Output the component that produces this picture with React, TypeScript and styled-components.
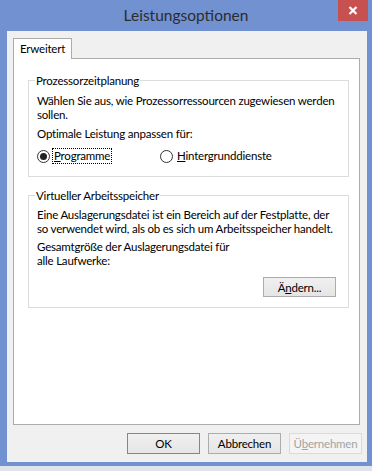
import React from "react";
import styled, { createGlobalStyle } from "styled-components";

const GlobalStyle = createGlobalStyle`
  html, body {
    margin: 0;
    padding: 0;
    background: #dfe4ea;
  }
  * {
    box-sizing: border-box;
  }
`;

const FONT = `Lato, "Liberation Sans", sans-serif`;

const Window = styled.div`
  width: 372px;
  height: 466px;
  background: #7191d1;
  display: flex;
  flex-direction: column;
  font-family: ${FONT};
  font-size: 11.5px;
  letter-spacing: -0.2px;
  color: #000;
`;

const TitleBar = styled.header`
  position: relative;
  height: 31px;
  flex: none;
  display: flex;
  align-items: center;
  justify-content: center;
  padding-bottom: 1px;
`;

const Title = styled.h1`
  margin: 0;
  font-family: ${FONT};
  font-weight: 400;
  font-size: 15.5px;
  letter-spacing: 0;
  color: #2c2c2c;
`;

const CloseButton = styled.button`
  position: absolute;
  top: 0;
  right: 4px;
  width: 30px;
  height: 21px;
  border: none;
  padding: 0;
  background: #c75050;
  display: grid;
  place-items: center;
`;

const Client = styled.div`
  flex: 1;
  margin: 0 5px 4px 7px;
  background: #f0f0f0;
  padding: 7px 6px 8px 6px;
  display: flex;
  flex-direction: column;
`;

const TabStrip = styled.div`
  height: 20px;
  display: flex;
  align-items: flex-start;
`;

const Tab = styled.div`
  position: relative;
  z-index: 1;
  width: 59px;
  height: 21px;
  background: #fff;
  border: 1px solid #acacac;
  border-bottom: none;
  padding-left: 6px;
  line-height: 19px;
`;

const Panel = styled.section`
  height: 367px;
  margin-right: 1px;
  background: #fff;
  border: 1px solid #acacac;
  padding: 14px 10px 0 14px;
`;

const Group = styled.fieldset<{ $gap?: number }>`
  margin: ${({ $gap }) => $gap ?? 0}px 0 0 0;
  padding: 0 8px ${({ $gap }) => ($gap ? 10 : 12)}px 8px;
  border: 1px solid #dcdcdc;
  min-inline-size: 0;
`;

const Legend = styled.legend`
  margin-left: -2px;
  padding: 0 1px;
  height: 15px;
  line-height: 15px;
`;

const Para = styled.p<{ $top: number }>`
  margin: ${({ $top }) => $top}px 0 0 0;
  line-height: 14px;
  white-space: nowrap;
`;

const RadioRow = styled.div`
  margin-top: 7px;
  height: 16px;
  display: grid;
  grid-template-columns: 123px auto;
  align-items: center;
`;

const RadioItem = styled.label`
  display: flex;
  align-items: center;
  gap: 2px;
`;

const RadioCircle = styled.span<{ $checked?: boolean }>`
  width: 13px;
  height: 13px;
  border-radius: 50%;
  border: 1px solid #333;
  background: #fff;
  display: grid;
  place-items: center;

  &::after {
    content: "";
    width: 7px;
    height: 7px;
    border-radius: 50%;
    background: ${({ $checked }) => ($checked ? "#222" : "transparent")};
  }
`;

const RadioLabel = styled.span<{ $focused?: boolean }>`
  padding: 0 1px;
  line-height: 14px;
  border: 1px dotted ${({ $focused }) => ($focused ? "#000" : "transparent")};
`;

const RightRow = styled.div<{ $top: number }>`
  margin-top: ${({ $top }) => $top}px;
  display: flex;
  justify-content: flex-end;
  gap: 8px;
`;

const Button = styled.button<{ $default?: boolean; $h?: number }>`
  width: 73px;
  height: ${({ $h }) => $h ?? 21}px;
  padding: 0;
  font-family: ${FONT};
  font-size: 11.5px;
  letter-spacing: -0.2px;
  color: ${({ disabled }) => (disabled ? "#a3a3a3" : "#000")};
  background: ${({ disabled }) =>
    disabled ? "#f4f4f4" : "linear-gradient(#f0f0f0, #e5e5e5)"};
  border: 1px solid
    ${({ $default, disabled }) =>
      $default ? "#3399ff" : disabled ? "#dadada" : "#acacac"};
`;

const ButtonRow = styled(RightRow)`
  margin-right: -1px;
`;

const GroupButtonRow = styled(RightRow)`
  padding-right: 4px;
`;

export default function App() {
  return (
    <>
      <GlobalStyle />
      <Window>
        <TitleBar>
          <Title>Leistungsoptionen</Title>
          <CloseButton aria-label="Schließen">
            <svg width="10" height="9" viewBox="0 0 10 9">
              <path
                d="M1.5 1 L8.5 8 M8.5 1 L1.5 8"
                stroke="#fff"
                strokeWidth="2.2"
              />
            </svg>
          </CloseButton>
        </TitleBar>
        <Client>
          <TabStrip>
            <Tab>Erweitert</Tab>
          </TabStrip>
          <Panel>
            <Group>
              <Legend>Prozessorzeitplanung</Legend>
              <Para $top={6}>
                Wählen Sie aus, wie Prozessorressourcen zugewiesen werden
                <br />
                sollen.
              </Para>
              <Para $top={5}>Optimale Leistung anpassen für:</Para>
              <RadioRow>
                <RadioItem>
                  <RadioCircle $checked />
                  <RadioLabel $focused>
                    <u>P</u>rogramme
                  </RadioLabel>
                </RadioItem>
                <RadioItem>
                  <RadioCircle />
                  <RadioLabel>
                    <u>H</u>intergrunddienste
                  </RadioLabel>
                </RadioItem>
              </RadioRow>
            </Group>
            <Group $gap={11}>
              <Legend>Virtueller Arbeitsspeicher</Legend>
              <Para $top={5}>
                Eine Auslagerungsdatei ist ein Bereich auf der Festplatte, der
                <br />
                so verwendet wird, als ob es sich um Arbeitsspeicher handelt.
              </Para>
              <Para $top={4}>
                Gesamtgröße der Auslagerungsdatei für
                <br />
                alle Laufwerke:
              </Para>
              <GroupButtonRow $top={9}>
                <Button $h={20}>
                  Ä<u>n</u>dern...
                </Button>
              </GroupButtonRow>
            </Group>
          </Panel>
          <ButtonRow $top={8}>
            <Button $default>OK</Button>
            <Button>Abbrechen</Button>
            <Button disabled>
              Ü<u>b</u>ernehmen
            </Button>
          </ButtonRow>
        </Client>
      </Window>
    </>
  );
}
